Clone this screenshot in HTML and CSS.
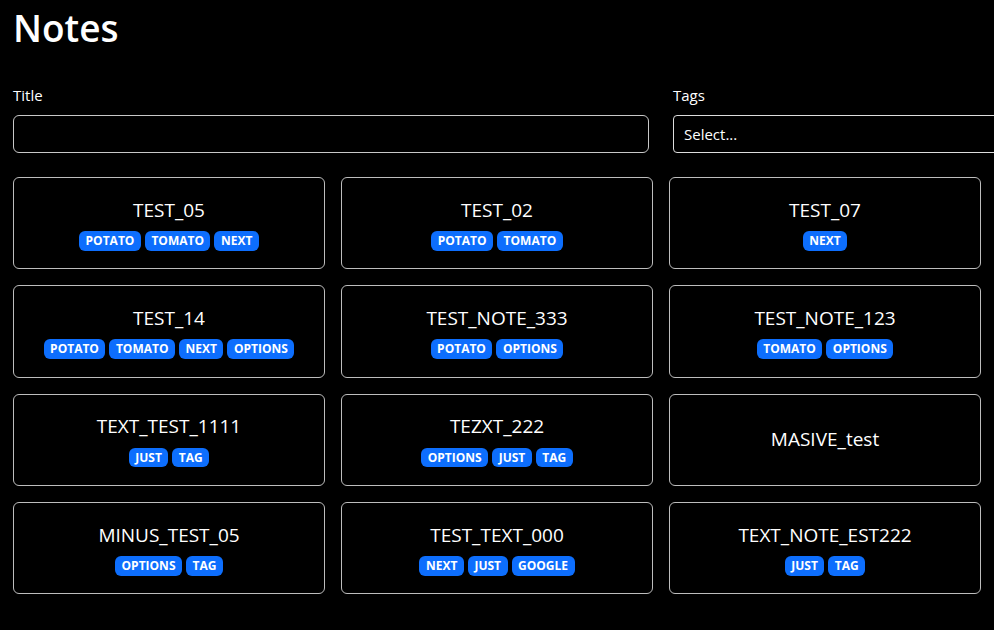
FILE: index.html
```html
<!DOCTYPE html>
<html lang="en">
<head>
<meta charset="utf-8">
<title>Notes</title>
<link rel="stylesheet" href="styles.css">
</head>
<body>
<div class="container">
  <h1 class="page-title">Notes</h1>
  <form class="filters">
    <div class="field">
      <label class="field-label" for="title">Title</label>
      <input class="text-input" id="title" type="text">
    </div>
    <div class="field">
      <label class="field-label">Tags</label>
      <div class="select-box"><span class="select-placeholder">Select...</span></div>
    </div>
  </form>
  <div class="notes-grid">
    <div class="note-card"><div class="note-body"><span class="note-title">TEST_05</span><div class="tags"><span class="badge">POTATO</span><span class="badge">TOMATO</span><span class="badge">NEXT</span></div></div></div>
    <div class="note-card"><div class="note-body"><span class="note-title">TEST_02</span><div class="tags"><span class="badge">POTATO</span><span class="badge">TOMATO</span></div></div></div>
    <div class="note-card"><div class="note-body"><span class="note-title">TEST_07</span><div class="tags"><span class="badge">NEXT</span></div></div></div>
    <div class="note-card"><div class="note-body"><span class="note-title">TEST_14</span><div class="tags"><span class="badge">POTATO</span><span class="badge">TOMATO</span><span class="badge">NEXT</span><span class="badge">OPTIONS</span></div></div></div>
    <div class="note-card"><div class="note-body"><span class="note-title">TEST_NOTE_333</span><div class="tags"><span class="badge">POTATO</span><span class="badge">OPTIONS</span></div></div></div>
    <div class="note-card"><div class="note-body"><span class="note-title">TEST_NOTE_123</span><div class="tags"><span class="badge">TOMATO</span><span class="badge">OPTIONS</span></div></div></div>
    <div class="note-card"><div class="note-body"><span class="note-title">TEXT_TEST_1111</span><div class="tags"><span class="badge">JUST</span><span class="badge">TAG</span></div></div></div>
    <div class="note-card"><div class="note-body"><span class="note-title">TEZXT_222</span><div class="tags"><span class="badge">OPTIONS</span><span class="badge">JUST</span><span class="badge">TAG</span></div></div></div>
    <div class="note-card"><div class="note-body"><span class="note-title">MASIVE_test</span></div></div>
    <div class="note-card"><div class="note-body"><span class="note-title">MINUS_TEST_05</span><div class="tags"><span class="badge">OPTIONS</span><span class="badge">TAG</span></div></div></div>
    <div class="note-card"><div class="note-body"><span class="note-title">TEST_TEXT_000</span><div class="tags"><span class="badge">NEXT</span><span class="badge">JUST</span><span class="badge">GOOGLE</span></div></div></div>
    <div class="note-card"><div class="note-body"><span class="note-title">TEXT_NOTE_EST222</span><div class="tags"><span class="badge">JUST</span><span class="badge">TAG</span></div></div></div>
  </div>
</div>
</body>
</html>
```

FILE: styles.css
```css
html, body {
  margin: 0;
  background: #000;
  color: #fff;
  overflow: hidden;
  font-family: "Segoe UI", "Open Sans", sans-serif;
  font-size: 16px;
  line-height: 1.5;
}
.container {
  padding: 0 0 0 13px;
}
.page-title {
  margin: 6px 0 34px;
  font-size: 37px;
  font-weight: 600;
  line-height: 1.2;
}
.filters {
  display: flex;
  gap: 24px;
  margin-bottom: 24px;
}
.field {
  flex: 0 0 636px;
}
.field-label {
  display: block;
  font-size: 15px;
  margin-bottom: 8px;
}
.text-input {
  box-sizing: border-box;
  width: 100%;
  height: 38px;
  background: #000;
  border: 1px solid #c8c8c8;
  border-radius: 6px;
  color: #fff;
  margin: 0;
  display: block;
}
.select-box {
  box-sizing: border-box;
  height: 38px;
  border: 1px solid #ddd;
  border-radius: 4px;
  display: flex;
  align-items: center;
  padding: 0 10px;
}
.select-placeholder {
  font-size: 15px;
}
.notes-grid {
  display: grid;
  grid-template-columns: repeat(3, 312px);
  gap: 16px;
}
.note-card {
  box-sizing: border-box;
  height: 92.33px;
  border: 1px solid #bdbdbd;
  border-radius: 6px;
}
.note-body {
  height: 100%;
  display: flex;
  flex-direction: column;
  align-items: center;
  justify-content: center;
  gap: 7px;
}
.note-title {
  font-size: 19px;
  line-height: 1.5;
}
.tags {
  display: flex;
  gap: 4px;
  justify-content: center;
}
.badge {
  background: #0d6efd;
  color: #fff;
  font-size: 12px;
  font-weight: 700;
  line-height: 1;
  padding: 4px 6.5px 3.5px;
  border-radius: 6px;
}
```
